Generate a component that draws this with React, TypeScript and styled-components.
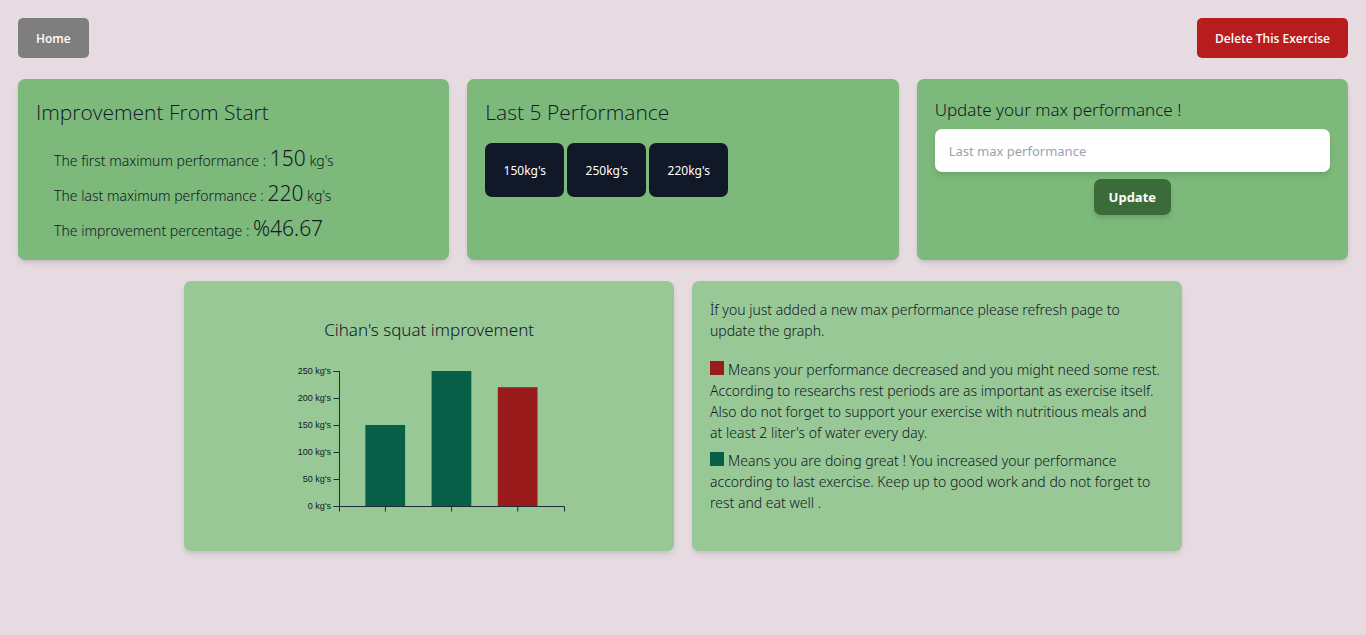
import React, { useState } from "react";
import styled, { createGlobalStyle } from "styled-components";

const GlobalStyle = createGlobalStyle`
  *, *::before, *::after { box-sizing: border-box; }
  body {
    margin: 0;
    background: #e6dbe1;
    color: #111827;
    font-family: "Noto Sans", "Open Sans", sans-serif;
    font-size: 14px;
    font-weight: 300;
    line-height: 21px;
  }
  h2, h3, p, ul { margin: 0; padding: 0; }
  button, input { font-family: inherit; }
`;

const Page = styled.main`
  display: flex;
  flex-direction: column;
  gap: 21px;
  padding: 18px;
`;

const TopBar = styled.nav`
  display: flex;
  justify-content: space-between;
`;

const NavButton = styled.button<{ $danger?: boolean }>`
  height: 40px;
  padding: 0 18px;
  border: 0;
  border-radius: 5px;
  background: ${(p) => (p.$danger ? "#b91c1c" : "#7e7e7e")};
  color: #fff;
  font-family: "Open Sans", sans-serif;
  font-size: 12px;
  font-weight: 600;
  cursor: pointer;
`;

const StatsRow = styled.div`
  display: grid;
  grid-template-columns: repeat(3, 1fr);
  gap: 18px;
`;

const DetailRow = styled.div`
  display: grid;
  grid-template-columns: repeat(2, 1fr);
  gap: 18px;
  width: 75%;
  margin: 0 auto;
`;

const Card = styled.section<{ $soft?: boolean }>`
  min-height: ${(p) => (p.$soft ? "270px" : "181px")};
  padding: 18px;
  border-radius: 7px;
  background: ${(p) => (p.$soft ? "#98c896" : "#7cb97a")};
  box-shadow: 0 4px 6px -1px rgba(0, 0, 0, 0.1), 0 2px 4px -1px rgba(0, 0, 0, 0.06);
`;

const CardTitle = styled.h2`
  font-family: "Open Sans", sans-serif;
  font-size: 21px;
  font-weight: 300;
  line-height: 30px;
`;

const SubTitle = styled.h3`
  font-size: 17px;
  font-weight: 300;
  line-height: 25px;
`;

const StatList = styled.ul`
  display: flex;
  flex-direction: column;
  gap: 7px;
  padding: 17px 18px 0;
  list-style: none;
`;

const StatItem = styled.li`
  line-height: 21px;
`;

const StatValue = styled.span`
  font-size: 21px;
  line-height: 28px;
`;

const ChipRow = styled.div`
  display: flex;
  flex-wrap: wrap;
  gap: 3px;
  padding-top: 16px;
`;

const Chip = styled.span`
  min-width: 79px;
  padding: 17px 18px 15px;
  border-radius: 7px;
  background: #111827;
  color: #fff;
  font-size: 12px;
  font-weight: 400;
  line-height: 22px;
  text-align: center;
`;

const UpdateForm = styled.form`
  display: flex;
  flex-direction: column;
  align-items: center;
  gap: 7px;
`;

const FormLabel = styled.label`
  align-self: stretch;
  font-size: 17px;
  line-height: 25px;
`;

const FormInput = styled.input`
  width: 100%;
  height: 43px;
  padding: 0 14px;
  border: 0;
  border-radius: 7px;
  background: #fff;
  color: #111827;
  font-size: 13px;
  box-shadow: 0 4px 6px -1px rgba(0, 0, 0, 0.1), 0 2px 4px -1px rgba(0, 0, 0, 0.06);
  &::placeholder { color: #9ca3af; }
`;

const SubmitButton = styled.button`
  height: 36px;
  padding: 0 15px;
  border: 0;
  border-radius: 7px;
  background: #3b6b38;
  color: #fff;
  font-size: 13px;
  font-weight: 700;
  box-shadow: 0 4px 6px -1px rgba(0, 0, 0, 0.1), 0 2px 4px -1px rgba(0, 0, 0, 0.06);
  cursor: pointer;
`;

const ChartCard = styled(Card)`
  display: flex;
  flex-direction: column;
  align-items: center;
  gap: 21px;
  padding-top: 36px;
`;

const ChartSvg = styled.svg`
  display: block;
  width: 300px;
  height: 160px;
  overflow: visible;
`;

const AxisLabel = styled.text`
  fill: #111827;
  font-family: "Liberation Sans", Arial, sans-serif;
  font-size: 9px;
  font-weight: 400;
  text-anchor: end;
`;

const Intro = styled.p`
  margin-bottom: 18px;
`;

const Note = styled.p`
  margin-bottom: 7px;
`;

const Swatch = styled.span<{ $color: string }>`
  display: inline-block;
  width: 14px;
  height: 14px;
  margin-right: 4px;
  background: ${(p) => p.$color};
`;

const GREEN = "#065f46";
const RED = "#991b1b";

const performances = [150, 250, 220];
const ticks = [250, 200, 150, 100, 50, 0];

const CHART_BOTTOM = 143;
const AXIS_X = 60;
const yFor = (value: number) => CHART_BOTTOM - (value * 135) / 250;

function ImprovementChart() {
  return (
    <ChartSvg viewBox="0 0 300 160" role="img" aria-label="Squat improvement bar chart">
      {performances.map((value, i) => (
        <rect
          key={i}
          x={86.4 + i * 66.2}
          y={yFor(value)}
          width={39.7}
          height={CHART_BOTTOM - yFor(value)}
          fill={i > 0 && value < performances[i - 1] ? RED : GREEN}
        />
      ))}
      <g fill="none" stroke="#1f2937">
        <path d="M54.5 8.5H60.5V143.5H54.5" />
        <path d="M60.5 148.5V143.5H285.5V148.5" />
        {ticks.map((t) => (
          <path key={t} d={`M54.5 ${yFor(t) + 0.5}H60.5`} />
        ))}
        {performances.map((_, i) => (
          <path key={i} d={`M${AXIS_X + 46.4 + i * 66.2} 143.5V148.5`} />
        ))}
      </g>
      {ticks.map((t) => (
        <AxisLabel key={t} x={52} y={yFor(t) + 3}>
          {`${t} kg's`}
        </AxisLabel>
      ))}
    </ChartSvg>
  );
}

export default function App() {
  const [value, setValue] = useState("");
  return (
    <>
      <GlobalStyle />
      <Page>
        <TopBar>
          <NavButton type="button">Home</NavButton>
          <NavButton type="button" $danger>Delete This Exercise</NavButton>
        </TopBar>
        <StatsRow>
          <Card>
            <CardTitle>Improvement From Start</CardTitle>
            <StatList>
              <StatItem>The first maximum performance : <StatValue>150</StatValue> kg's</StatItem>
              <StatItem>The last maximum performance : <StatValue>220</StatValue> kg's</StatItem>
              <StatItem>The improvement percentage : <StatValue>%46.67</StatValue></StatItem>
            </StatList>
          </Card>
          <Card>
            <CardTitle>Last 5 Performance</CardTitle>
            <ChipRow>
              {performances.map((p) => (
                <Chip key={p}>{`${p}kg's`}</Chip>
              ))}
            </ChipRow>
          </Card>
          <Card>
            <UpdateForm onSubmit={(e) => e.preventDefault()}>
              <FormLabel htmlFor="max-performance">Update your max performance !</FormLabel>
              <FormInput
                id="max-performance"
                placeholder="Last max performance"
                value={value}
                onChange={(e) => setValue(e.target.value)}
              />
              <SubmitButton type="submit">Update</SubmitButton>
            </UpdateForm>
          </Card>
        </StatsRow>
        <DetailRow>
          <ChartCard $soft>
            <SubTitle>Cihan's squat improvement</SubTitle>
            <ImprovementChart />
          </ChartCard>
          <Card $soft>
            <Intro>İf you just added a new max performance please refresh page to update the graph.</Intro>
            <Note>
              <Swatch $color={RED} />
              Means your performance decreased and you might need some rest. According to researchs rest periods
              are as important as exercise itself. Also do not forget to support your exercise with nutritious
              meals and at&nbsp;least 2 liter's of water every day.
            </Note>
            <Note>
              <Swatch $color={GREEN} />
              Means you are doing great ! You increased your performance according to last exercise. Keep up to
              good work and do not forget to rest and eat well .
            </Note>
          </Card>
        </DetailRow>
      </Page>
    </>
  );
}
